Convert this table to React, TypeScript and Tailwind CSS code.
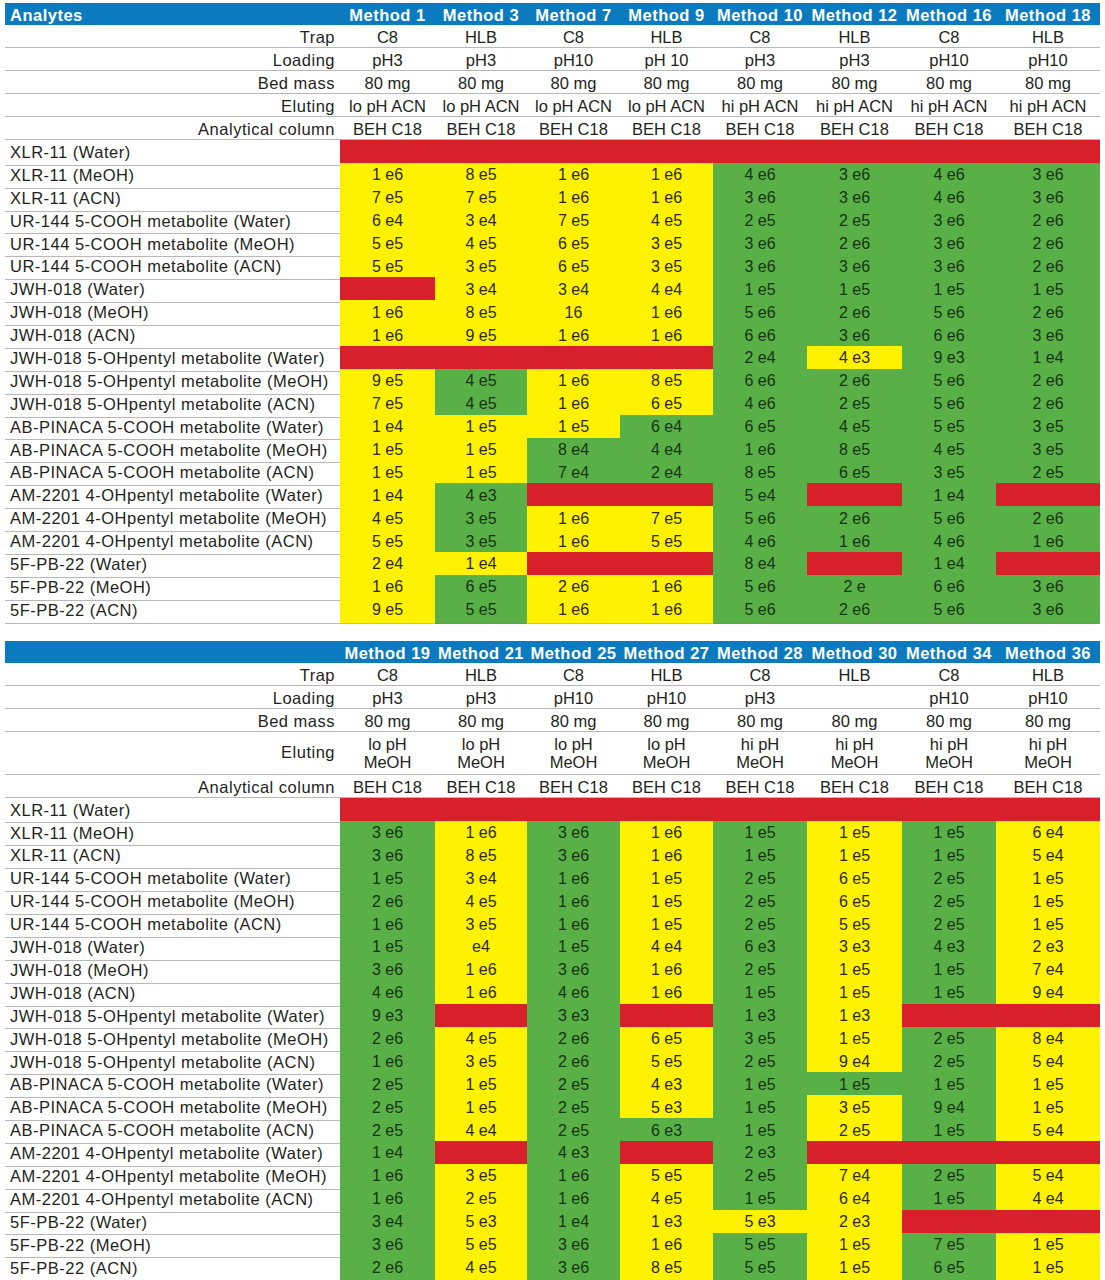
import React from "react";

const COLS = "grid grid-cols-[335px_95px_92px_93px_93px_94px_95px_94px_104px]";

const LABELS = [
  "XLR-11 (Water)",
  "XLR-11 (MeOH)",
  "XLR-11 (ACN)",
  "UR-144 5-COOH metabolite (Water)",
  "UR-144 5-COOH metabolite (MeOH)",
  "UR-144 5-COOH metabolite (ACN)",
  "JWH-018 (Water)",
  "JWH-018 (MeOH)",
  "JWH-018 (ACN)",
  "JWH-018 5-OHpentyl metabolite (Water)",
  "JWH-018 5-OHpentyl metabolite (MeOH)",
  "JWH-018 5-OHpentyl metabolite (ACN)",
  "AB-PINACA 5-COOH metabolite (Water)",
  "AB-PINACA 5-COOH metabolite (MeOH)",
  "AB-PINACA 5-COOH metabolite (ACN)",
  "AM-2201 4-OHpentyl metabolite (Water)",
  "AM-2201 4-OHpentyl metabolite (MeOH)",
  "AM-2201 4-OHpentyl metabolite (ACN)",
  "5F-PB-22 (Water)",
  "5F-PB-22 (MeOH)",
  "5F-PB-22 (ACN)",
];

type HeaderRow = { label: string; values: string[][]; tall?: boolean };
type TableData = { methods: string[]; header: HeaderRow[]; rows: string[] };

const rep = (v: string[], n: number) => Array.from({ length: n }, () => v);

const TABLE1: TableData = {
  methods: ["Method 1", "Method 3", "Method 7", "Method 9", "Method 10", "Method 12", "Method 16", "Method 18"],
  header: [
    { label: "Trap", values: [["C8"], ["HLB"], ["C8"], ["HLB"], ["C8"], ["HLB"], ["C8"], ["HLB"]] },
    { label: "Loading", values: [["pH3"], ["pH3"], ["pH10"], ["pH 10"], ["pH3"], ["pH3"], ["pH10"], ["pH10"]] },
    { label: "Bed mass", values: rep(["80 mg"], 8) },
    { label: "Eluting", values: [...rep(["lo pH ACN"], 4), ...rep(["hi pH ACN"], 4)] },
    { label: "Analytical column", values: rep(["BEH C18"], 8) },
  ],
  rows: [
    "R|R|R|R|R|R|R|R",
    "Y1 e6|Y8 e5|Y1 e6|Y1 e6|G4 e6|G3 e6|G4 e6|G3 e6",
    "Y7 e5|Y7 e5|Y1 e6|Y1 e6|G3 e6|G3 e6|G4 e6|G3 e6",
    "Y6 e4|Y3 e4|Y7 e5|Y4 e5|G2 e5|G2 e5|G3 e6|G2 e6",
    "Y5 e5|Y4 e5|Y6 e5|Y3 e5|G3 e6|G2 e6|G3 e6|G2 e6",
    "Y5 e5|Y3 e5|Y6 e5|Y3 e5|G3 e6|G3 e6|G3 e6|G2 e6",
    "R|Y3 e4|Y3 e4|Y4 e4|G1 e5|G1 e5|G1 e5|G1 e5",
    "Y1 e6|Y8 e5|Y16|Y1 e6|G5 e6|G2 e6|G5 e6|G2 e6",
    "Y1 e6|Y9 e5|Y1 e6|Y1 e6|G6 e6|G3 e6|G6 e6|G3 e6",
    "R|R|R|R|G2 e4|Y4 e3|G9 e3|G1 e4",
    "Y9 e5|G4 e5|Y1 e6|Y8 e5|G6 e6|G2 e6|G5 e6|G2 e6",
    "Y7 e5|G4 e5|Y1 e6|Y6 e5|G4 e6|G2 e5|G5 e6|G2 e6",
    "Y1 e4|Y1 e5|Y1 e5|G6 e4|G6 e5|G4 e5|G5 e5|G3 e5",
    "Y1 e5|Y1 e5|G8 e4|G4 e4|G1 e6|G8 e5|G4 e5|G3 e5",
    "Y1 e5|Y1 e5|G7 e4|G2 e4|G8 e5|G6 e5|G3 e5|G2 e5",
    "Y1 e4|G4 e3|R|R|G5 e4|R|G1 e4|R",
    "Y4 e5|G3 e5|Y1 e6|Y7 e5|G5 e6|G2 e6|G5 e6|G2 e6",
    "Y5 e5|G3 e5|Y1 e6|Y5 e5|G4 e6|G1 e6|G4 e6|G1 e6",
    "Y2 e4|Y1 e4|R|R|G8 e4|R|G1 e4|R",
    "Y1 e6|G6 e5|Y2 e6|Y1 e6|G5 e6|G2 e|G6 e6|G3 e6",
    "Y9 e5|G5 e5|Y1 e6|Y1 e6|G5 e6|G2 e6|G5 e6|G3 e6",
  ],
};

const TABLE2: TableData = {
  methods: ["Method 19", "Method 21", "Method 25", "Method 27", "Method 28", "Method 30", "Method 34", "Method 36"],
  header: [
    { label: "Trap", values: [["C8"], ["HLB"], ["C8"], ["HLB"], ["C8"], ["HLB"], ["C8"], ["HLB"]] },
    { label: "Loading", values: [["pH3"], ["pH3"], ["pH10"], ["pH10"], ["pH3"], [""], ["pH10"], ["pH10"]] },
    { label: "Bed mass", values: rep(["80 mg"], 8) },
    { label: "Eluting", tall: true, values: [...rep(["lo pH", "MeOH"], 4), ...rep(["hi pH", "MeOH"], 4)] },
    { label: "Analytical column", values: rep(["BEH C18"], 8) },
  ],
  rows: [
    "R|R|R|R|R|R|R|R",
    "G3 e6|Y1 e6|G3 e6|Y1 e6|G1 e5|Y1 e5|G1 e5|Y6 e4",
    "G3 e6|Y8 e5|G3 e6|Y1 e6|G1 e5|Y1 e5|G1 e5|Y5 e4",
    "G1 e5|Y3 e4|G1 e6|Y1 e5|G2 e5|Y6 e5|G2 e5|Y1 e5",
    "G2 e6|Y4 e5|G1 e6|Y1 e5|G2 e5|Y6 e5|G2 e5|Y1 e5",
    "G1 e6|Y3 e5|G1 e6|Y1 e5|G2 e5|Y5 e5|G2 e5|Y1 e5",
    "G1 e5|Ye4|G1 e5|Y4 e4|G6 e3|Y3 e3|G4 e3|Y2 e3",
    "G3 e6|Y1 e6|G3 e6|Y1 e6|G2 e5|Y1 e5|G1 e5|Y7 e4",
    "G4 e6|Y1 e6|G4 e6|Y1 e6|G1 e5|Y1 e5|G1 e5|Y9 e4",
    "G9 e3|R|G3 e3|R|G1 e3|Y1 e3|R|R",
    "G2 e6|Y4 e5|G2 e6|Y6 e5|G3 e5|Y1 e5|G2 e5|Y8 e4",
    "G1 e6|Y3 e5|G2 e6|Y5 e5|G2 e5|Y9 e4|G2 e5|Y5 e4",
    "G2 e5|Y1 e5|G2 e5|Y4 e3|G1 e5|G1 e5|G1 e5|Y1 e5",
    "G2 e5|Y1 e5|G2 e5|Y5 e3|G1 e5|Y3 e5|G9 e4|Y1 e5",
    "G2 e5|Y4 e4|G2 e5|G6 e3|G1 e5|Y2 e5|G1 e5|Y5 e4",
    "G1 e4|R|G4 e3|R|G2 e3|R|R|R",
    "G1 e6|Y3 e5|G1 e6|Y5 e5|G2 e5|Y7 e4|G2 e5|Y5 e4",
    "G1 e6|Y2 e5|G1 e6|Y4 e5|G1 e5|Y6 e4|G1 e5|Y4 e4",
    "G3 e4|Y5 e3|G1 e4|Y1 e3|Y5 e3|Y2 e3|R|R",
    "G3 e6|Y5 e5|G3 e6|Y1 e6|G5 e5|Y1 e5|G7 e5|Y1 e5",
    "G2 e6|Y4 e5|G3 e6|Y8 e5|G5 e5|Y1 e5|G6 e5|Y1 e5",
  ],
};

const BG: Record<string, string> = {
  Y: "bg-[#fff200] text-[#2b2a10]",
  G: "bg-[#58b046] text-[#183414]",
  R: "bg-[#d8202a]",
};

function Table({ data, showAnalytes }: { data: TableData; showAnalytes: boolean }) {
  return (
    <div className="w-[1095px] text-[#231f20]">
      <div className={`${COLS} h-[22px] bg-[#0c7abf] text-white font-bold text-[16.5px] tracking-[0.5px]`}>
        <div className="flex items-center pl-[5px]">{showAnalytes ? "Analytes" : ""}</div>
        {data.methods.map((m) => (
          <div key={m} className="flex items-center justify-center whitespace-nowrap">
            {m}
          </div>
        ))}
      </div>
      {data.header.map((h) => (
        <div
          key={h.label}
          className={`${COLS} ${h.tall ? "h-[43px]" : "h-[23px]"} border-b border-[#b8b8b8] text-[16.5px]`}
        >
          <div className="flex items-center justify-end pr-[5px] tracking-[0.5px]">{h.label}</div>
          {h.values.map((v, i) => (
            <div key={i} className="flex flex-col items-center justify-center leading-[18px] whitespace-nowrap">
              {v.map((line, j) => (
                <span key={j}>{line}</span>
              ))}
            </div>
          ))}
        </div>
      ))}
      {data.rows.map((r, ri) => (
        <div key={ri} className={`${COLS} h-[22.9px] text-[16.5px]`}>
          <div className="flex items-center pl-[5px] border-b border-[#b8b8b8] tracking-[0.5px] whitespace-nowrap">
            {LABELS[ri]}
          </div>
          {r.split("|").map((c, ci) => (
            <div
              key={ci}
              className={`flex items-center justify-center border-b border-[#7a7a7a]/30 text-[16px] ${BG[c[0]]}`}
            >
              {c.slice(1)}
            </div>
          ))}
        </div>
      ))}
    </div>
  );
}

export default function App() {
  return (
    <div className="w-[1105px] h-[1280px] bg-white overflow-hidden pl-[5px] pt-[3px] font-['Liberation_Sans',Arial,sans-serif]">
      <Table data={TABLE1} showAnalytes={true} />
      <div className="h-[20px]" />
      <Table data={TABLE2} showAnalytes={false} />
    </div>
  );
}
